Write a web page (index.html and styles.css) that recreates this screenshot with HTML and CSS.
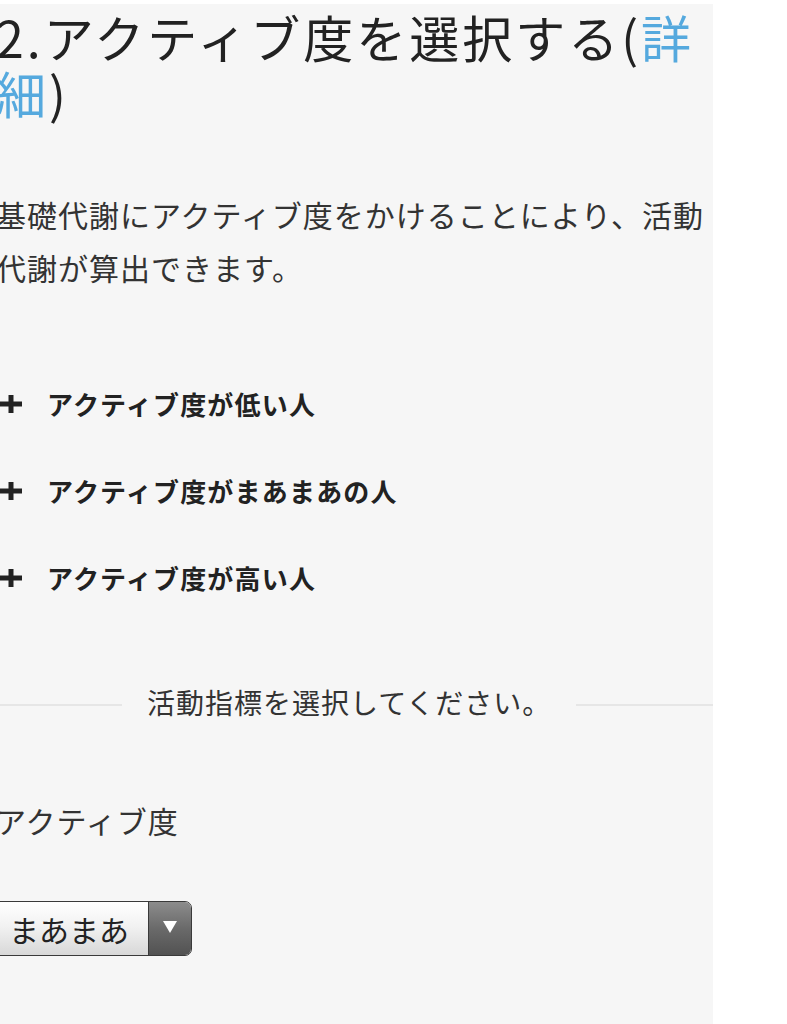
FILE: index.html
```html
<!DOCTYPE html>
<html lang="ja">
<head>
	<meta charset="utf-8"/>
	<title>アクティブ度を選択する</title>
	<link rel="stylesheet" href="styles.css">
</head>
<body>
	<div class="page">
		<div class="content">
			<h2 class="title">2.アクティブ度を選択する(<a href="#detail">詳細</a>)</h2>
			<p class="lead">基礎代謝にアクティブ度をかけることにより、活動代謝が算出できます。</p>
			<ul class="levels">
				<li><svg class="plus" width="22" height="18" viewBox="0 0 22 18"><rect x="0" y="6.5" width="22" height="5"/><rect x="8.5" y="0" width="5" height="18"/></svg>アクティブ度が低い人</li>
				<li><svg class="plus" width="22" height="18" viewBox="0 0 22 18"><rect x="0" y="6.5" width="22" height="5"/><rect x="8.5" y="0" width="5" height="18"/></svg>アクティブ度がまあまあの人</li>
				<li><svg class="plus" width="22" height="18" viewBox="0 0 22 18"><rect x="0" y="6.5" width="22" height="5"/><rect x="8.5" y="0" width="5" height="18"/></svg>アクティブ度が高い人</li>
			</ul>
			<div class="divider"><span>活動指標を選択してください。</span></div>
			<div class="field">
				<p class="field-label">アクティブ度</p>
				<div class="select">
					<span class="select-value">まあまあ</span>
					<span class="select-btn"><svg width="14" height="12" viewBox="0 0 14 12"><polygon points="0,0 14,0 7,12" fill="#fff"/></svg></span>
				</div>
			</div>
		</div>
	</div>
</body>
</html>
```

FILE: styles.css
```css
body {
	margin: 0px;
	background-color: #fff;
	font-family: "Noto Sans CJK JP", "Noto Sans", sans-serif;
	color: #222;
	overflow: hidden;
}
.page {
	width: 713px;
	min-height: 1020px;
	margin-top: 4px;
	background-color: #f6f6f6;
}
.content {
	margin-left: -4px;
	padding-top: 4px;
}
.title {
	margin: 0px;
	font-size: 50px;
	font-weight: normal;
	letter-spacing: 3px;
	line-height: 56px;
	color: #222;
}
.title a {
	color: #55a9de;
	text-decoration: none;
}
.lead {
	margin: 68px 0px 0px 0px;
	font-size: 30px;
	letter-spacing: 1px;
	line-height: 53px;
	color: #333;
}
.levels {
	list-style: none;
	margin: 90px 0px 0px 0px;
	padding: 0px;
	display: flex;
	flex-direction: column;
	gap: 47px;
}
.levels li {
	display: flex;
	align-items: center;
	gap: 25px;
	padding-left: 4px;
	font-size: 26px;
	font-weight: bold;
	letter-spacing: 1.2px;
	line-height: 40px;
	color: #222;
}
.plus {
	fill: #222;
	flex: none;
}
.divider {
	margin-top: 84px;
	display: flex;
	align-items: center;
	gap: 25px;
	font-size: 28px;
	letter-spacing: 1px;
	line-height: 40px;
	color: #333;
}
.divider::before, .divider::after {
	content: "";
	height: 2px;
	margin-top: 6px;
	background-color: #e6e6e6;
}
.divider::before {
	flex: 0 0 126px;
}
.divider::after {
	flex: 1;
}
.field-label {
	margin: 78px 0px 0px 0px;
	font-size: 30px;
	letter-spacing: 1px;
	line-height: 40px;
	color: #333;
}
.select {
	margin-top: 61px;
	display: inline-flex;
	height: 55px;
	box-sizing: border-box;
	border: 1.5px solid #3a3a3a;
	border-radius: 0px 7px 7px 0px;
	overflow: hidden;
}
.select-value {
	display: flex;
	align-items: center;
	width: 139px;
	padding-left: 12px;
	font-size: 30px;
	color: #222;
	background: linear-gradient(#ffffff, #f2f2f2 45%, #d8d8d8);
	border-right: 1.5px solid #3a3a3a;
}
.select-btn {
	display: flex;
	align-items: center;
	justify-content: center;
	width: 42px;
	padding-bottom: 3px;
	background: linear-gradient(#8c8c8c, #6a6a6a 50%, #525252);
}
```
